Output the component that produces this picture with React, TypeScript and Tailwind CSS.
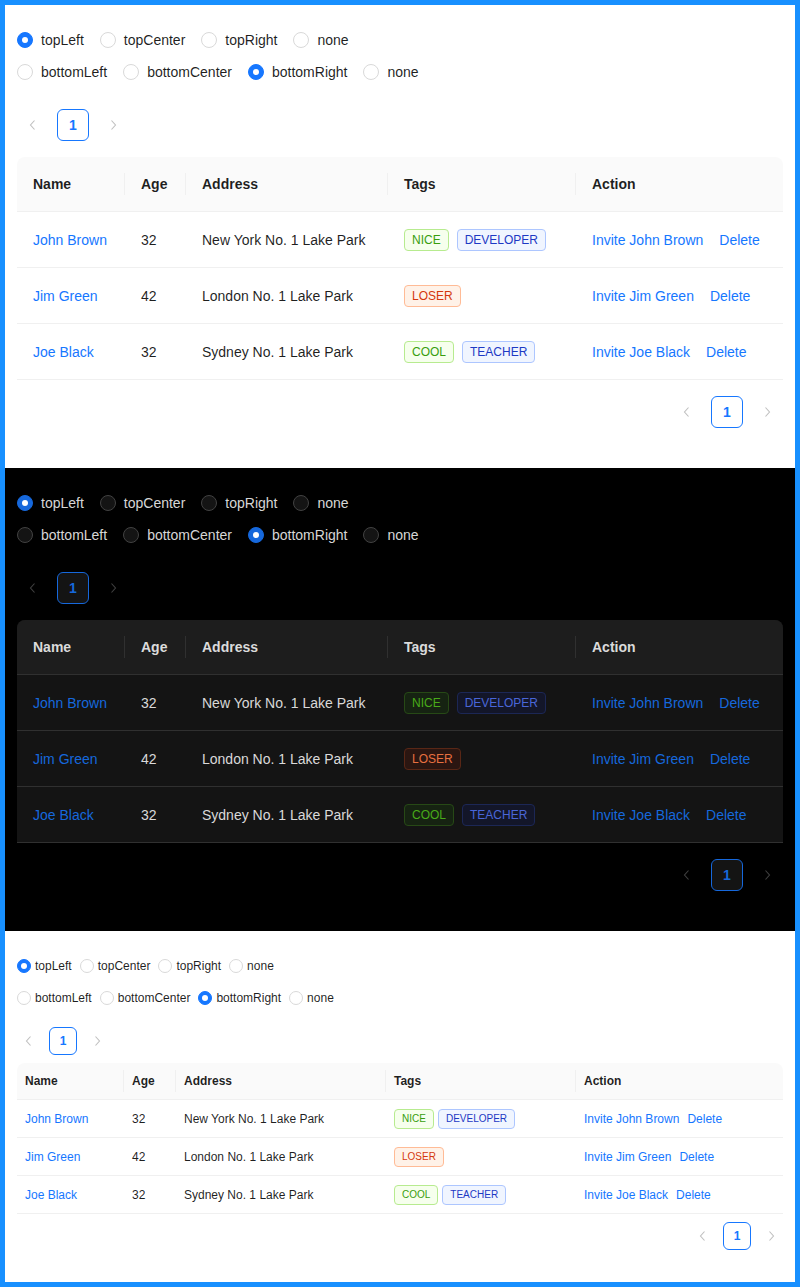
import React from "react";

type TagColor = "green" | "geekblue" | "volcano";

interface Row {
  key: string;
  name: string;
  age: number;
  address: string;
  tags: { label: string; color: TagColor }[];
}

const rows: Row[] = [
  {
    key: "1",
    name: "John Brown",
    age: 32,
    address: "New York No. 1 Lake Park",
    tags: [
      { label: "NICE", color: "green" },
      { label: "DEVELOPER", color: "geekblue" },
    ],
  },
  {
    key: "2",
    name: "Jim Green",
    age: 42,
    address: "London No. 1 Lake Park",
    tags: [{ label: "LOSER", color: "volcano" }],
  },
  {
    key: "3",
    name: "Joe Black",
    age: 32,
    address: "Sydney No. 1 Lake Park",
    tags: [
      { label: "COOL", color: "green" },
      { label: "TEACHER", color: "geekblue" },
    ],
  },
];

const tagLight: Record<TagColor, string> = {
  green: "bg-[#f6ffed] border-[#b7eb8f] text-[#389e0d]",
  geekblue: "bg-[#f0f5ff] border-[#adc6ff] text-[#1d39c4]",
  volcano: "bg-[#fff2e8] border-[#ffbb96] text-[#d4380d]",
};

const tagDark: Record<TagColor, string> = {
  green: "bg-[#162312] border-[#274916] text-[#49aa19]",
  geekblue: "bg-[#131629] border-[#1c2755] text-[#4a66d8]",
  volcano: "bg-[#2b1611] border-[#592716] text-[#e87040]",
};

const topOptions = ["topLeft", "topCenter", "topRight", "none"];
const bottomOptions = ["bottomLeft", "bottomCenter", "bottomRight", "none"];

function Radio({ label, checked, dark, small }: { label: string; checked: boolean; dark: boolean; small: boolean }) {
  const circle = checked
    ? dark
      ? "bg-[#1668dc] border-[#1668dc]"
      : "bg-[#1677ff] border-[#1677ff]"
    : dark
      ? "bg-[#141414] border-[#424242]"
      : "bg-white border-[#d9d9d9]";
  return (
    <label className={`inline-flex items-center ${small ? "mr-0" : "mr-2"}`}>
      <span
        className={`flex items-center justify-center rounded-full border ${circle} ${small ? "w-3.5 h-3.5" : "w-4 h-4"}`}
      >
        {checked && <span className="w-1.5 h-1.5 rounded-full bg-white" />}
      </span>
      <span className={small ? "pl-1 pr-2 text-xs" : "px-2 text-sm"}>{label}</span>
    </label>
  );
}

function Arrow({ dir, dark }: { dir: "left" | "right"; dark: boolean }) {
  return (
    <svg
      width="12"
      height="12"
      viewBox="0 0 12 12"
      fill="none"
      stroke={dark ? "rgba(255,255,255,0.25)" : "rgba(0,0,0,0.25)"}
      strokeWidth="1.1"
    >
      {dir === "left" ? <path d="M7.5 1.5 L3.5 6 L7.5 10.5" /> : <path d="M4.5 1.5 L8.5 6 L4.5 10.5" />}
    </svg>
  );
}

function Pager({ dark, small, end }: { dark: boolean; small: boolean; end?: boolean }) {
  const btn = small ? "w-6 h-7" : "w-8 h-8";
  const item = dark
    ? "border-[#1668dc] text-[#1668dc] bg-[#141414]"
    : "border-[#1677ff] text-[#1677ff] bg-white";
  return (
    <div className={`flex items-center gap-2 ${end ? "justify-end" : ""}`}>
      <span className={`flex items-center justify-center ${btn}`}>
        <Arrow dir="left" dark={dark} />
      </span>
      <span
        className={`flex items-center justify-center rounded-md border font-bold ${item} ${small ? "w-7 h-7 text-xs" : "w-8 h-8 text-sm"}`}
      >
        1
      </span>
      <span className={`flex items-center justify-center ${btn}`}>
        <Arrow dir="right" dark={dark} />
      </span>
    </div>
  );
}

function DemoTable({ dark, small }: { dark: boolean; small: boolean }) {
  const cols = small
    ? "grid-cols-[107px_52px_210px_190px_207px]"
    : "grid-cols-[108px_61px_202px_188px_207px]";
  const line = dark ? "border-[#303030]" : "border-[#f0f0f0]";
  const divider = dark ? "bg-[#303030]" : "bg-[#f0f0f0]";
  const cell = small ? "px-2" : "px-4";
  const link = dark ? "text-[#1668dc]" : "text-[#1677ff]";
  const headers = ["Name", "Age", "Address", "Tags", "Action"];

  return (
    <div className={`rounded-t-lg ${dark ? "bg-[#141414]" : "bg-white"} ${small ? "text-xs" : "text-sm"}`}>
      <div
        className={`grid ${cols} border-b ${line} rounded-t-lg font-bold ${dark ? "bg-[#1d1d1d]" : "bg-[#fafafa]"} ${small ? "h-[37px]" : "h-[55px]"}`}
      >
        {headers.map((h, i) => (
          <div key={h} className={`relative flex items-center ${cell}`}>
            {h}
            {i < headers.length - 1 && (
              <span className={`absolute right-0 top-1/2 -translate-y-1/2 w-px h-[22px] ${divider}`} />
            )}
          </div>
        ))}
      </div>
      {rows.map((r) => (
        <div key={r.key} className={`grid ${cols} border-b ${line} ${small ? "h-[38px]" : "h-14"}`}>
          <div className={`flex items-center ${cell} ${link}`}>{r.name}</div>
          <div className={`flex items-center ${cell}`}>{r.age}</div>
          <div className={`flex items-center ${cell}`}>{r.address}</div>
          <div className={`flex items-center ${cell} ${small ? "gap-1" : "gap-2"}`}>
            {r.tags.map((t) => (
              <span
                key={t.label}
                className={`inline-flex items-center rounded border px-[7px] ${dark ? tagDark[t.color] : tagLight[t.color]} ${small ? "h-5 text-[10px]" : "h-[22px] text-xs"}`}
              >
                {t.label}
              </span>
            ))}
          </div>
          <div className={`flex items-center ${cell} ${link} ${small ? "gap-2" : "gap-4"}`}>
            <span>Invite {r.name}</span>
            <span>Delete</span>
          </div>
        </div>
      ))}
    </div>
  );
}

function Section({ dark, small }: { dark: boolean; small: boolean }) {
  return (
    <div
      className={`flex flex-col px-3 pt-6 ${small ? "pb-8" : "pb-10"} ${dark ? "bg-black text-[rgba(255,255,255,0.85)]" : "bg-white text-[rgba(0,0,0,0.88)]"}`}
    >
      <div className="flex items-center h-[22px] mb-2.5">
        {topOptions.map((o, i) => (
          <Radio key={o + i} label={o} checked={o === "topLeft"} dark={dark} small={small} />
        ))}
      </div>
      <div className="flex items-center h-[22px] mb-2.5">
        {bottomOptions.map((o, i) => (
          <Radio key={o + i} label={o} checked={o === "bottomRight"} dark={dark} small={small} />
        ))}
      </div>
      <div className={small ? "mt-2 mb-2" : "mt-4 mb-4"}>
        <Pager dark={dark} small={small} />
      </div>
      <DemoTable dark={dark} small={small} />
      <div className={small ? "mt-2" : "mt-4"}>
        <Pager dark={dark} small={small} end />
      </div>
    </div>
  );
}

export default function App() {
  return (
    <div className="min-h-[1287px] border-[5px] border-[#1890ff] bg-white font-['Liberation_Sans',Arial,sans-serif]">
      <Section dark={false} small={false} />
      <Section dark={true} small={false} />
      <Section dark={false} small={true} />
    </div>
  );
}
